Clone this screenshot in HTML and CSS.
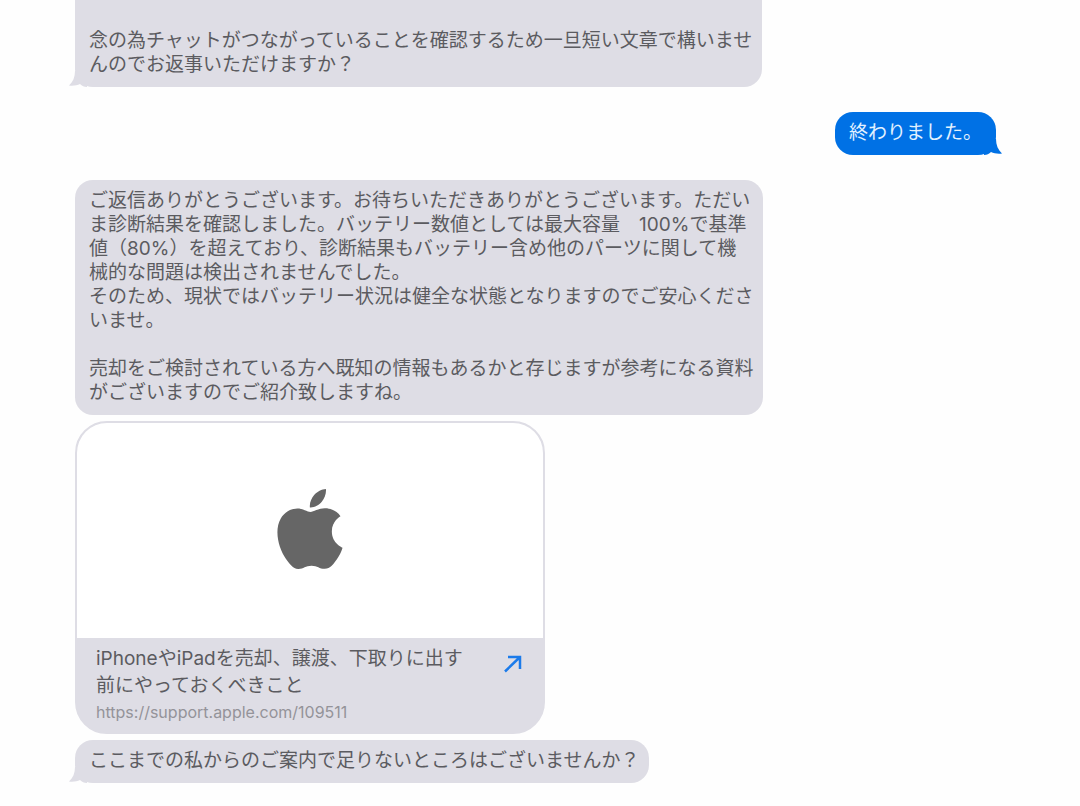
FILE: index.html
```
<!DOCTYPE html>
<html lang="ja">
<head>
	<meta charset="UTF-8">
	<meta name="viewport" content="width=device-width, initial-scale=1">
	<title>チャット</title>
	<link rel="stylesheet" href="styles.css">
</head>
<body>
	<main class="chat">
		<section class="group received">
			<p class="bubble continued">念の為チャットがつながっていることを確認するため一旦短い文章で構いませ<br>んのでお返事いただけますか？
				<svg class="tail" viewBox="0 0 18 16" aria-hidden="true"><path d="M6 0C6 6 4 11 0 14.500C4 15 8 14.500 11 13C13 15 15 16 18 16V0Z"/></svg>
			</p>
		</section>
		<section class="group sent">
			<p class="bubble">終わりました。
				<svg class="tail" viewBox="0 0 18 16" aria-hidden="true"><path d="M6 0C6 6 4 11 0 14.500C4 15 8 14.500 11 13C13 15 15 16 18 16V0Z"/></svg>
			</p>
		</section>
		<section class="group received">
			<p class="bubble">ご返信ありがとうございます。お待ちいただきありがとうございます。ただい<br>ま診断結果を確認しました。バッテリー数値としては最大容量　100%で基準<br>値（80%）を超えており、診断結果もバッテリー含め他のパーツに関して機<br>械的な問題は検出されませんでした。<br>そのため、現状ではバッテリー状況は健全な状態となりますのでご安心くださ<br>いませ。<br><br>売却をご検討されている方へ既知の情報もあるかと存じますが参考になる資料<br>がございますのでご紹介致しますね。</p>
			<a class="card" href="https://support.apple.com/109511">
				<span class="preview">
					<svg class="logo" viewBox="0 0 24 24" role="img" aria-label="Apple"><path d="M12.152 6.896c-.948 0-2.415-1.078-3.96-1.04-2.04.027-3.91 1.183-4.961 3.014-2.117 3.675-.546 9.103 1.519 12.09 1.013 1.454 2.208 3.09 3.792 3.039 1.52-.065 2.09-.987 3.935-.987 1.831 0 2.35.987 3.96.948 1.637-.026 2.676-1.48 3.676-2.948 1.156-1.688 1.636-3.325 1.662-3.415-.039-.013-3.182-1.221-3.22-4.857-.026-3.04 2.48-4.494 2.597-4.559-1.429-2.09-3.623-2.324-4.39-2.376-2-.156-3.675 1.09-4.61 1.09zM15.53 3.83c.843-1.012 1.4-2.427 1.245-3.83-1.207.052-2.662.805-3.532 1.818-.78.896-1.454 2.338-1.273 3.714 1.338.104 2.715-.688 3.559-1.701z"/></svg>
				</span>
				<span class="info">
					<span class="info-text">
						<span class="title">iPhoneやiPadを売却、譲渡、下取りに出す<br>前にやっておくべきこと</span>
						<span class="url">https://support.apple.com/109511</span>
					</span>
					<svg class="arrow" viewBox="0 0 18 18" aria-hidden="true"><path d="M1 16.500L16 2M4 2H16V14"/></svg>
				</span>
			</a>
			<p class="bubble">ここまでの私からのご案内で足りないところはございませんか？
				<svg class="tail" viewBox="0 0 18 16" aria-hidden="true"><path d="M6 0C6 6 4 11 0 14.500C4 15 8 14.500 11 13C13 15 15 16 18 16V0Z"/></svg>
			</p>
		</section>
	</main>
</body>
</html>
```
FILE: styles.css
```
* {margin:0;padding:0;box-sizing:border-box;}
body {background-color:#fefefe;color:#5b5b60;font-family:Inter,"Noto Sans CJK JP",sans-serif;font-size:19px;line-height:24px;}

.chat {display:flex;flex-flow:column nowrap;gap:25px;padding:0 84px 23px 75px;}
.group {display:flex;flex-flow:column nowrap;align-items:flex-start;gap:6px;}
.sent {align-items:flex-end;}

.bubble {position:relative;max-width:100%;padding:9px 10px 10px 14px;border-radius:18px;background-color:#dedde5;}
.sent .bubble {padding:9px 14px 10px;background-color:#0071e5;color:#e3f1ff;}
.continued {padding-top:29px;border-top-left-radius:0;border-top-right-radius:0;}

.tail {position:absolute;left:-6px;bottom:0;width:18px;height:16px;fill:#dedde5;}
.sent .tail {left:auto;right:-6px;fill:#0071e5;transform:scaleX(-1);}

.card {display:flex;flex-flow:column nowrap;width:470px;max-width:100%;border:2px solid #dedde5;border-radius:32px;overflow:hidden;background-color:#dedde5;color:inherit;text-decoration:none;}
.preview {display:flex;justify-content:center;align-items:center;padding:66px 0 69px;background-color:#fff;}
.logo {width:80px;height:80px;fill:#666;}
.info {display:flex;justify-content:space-between;align-items:flex-start;padding:7px 21px 8px 19px;}
.info-text {display:flex;flex-flow:column nowrap;gap:1px;}
.title {line-height:27px;}
.url {font-size:16px;color:#949399;}
.arrow {flex:0 0 auto;width:18px;height:18px;margin-top:10px;fill:none;stroke:#1c7bea;stroke-width:2.500;}
```
